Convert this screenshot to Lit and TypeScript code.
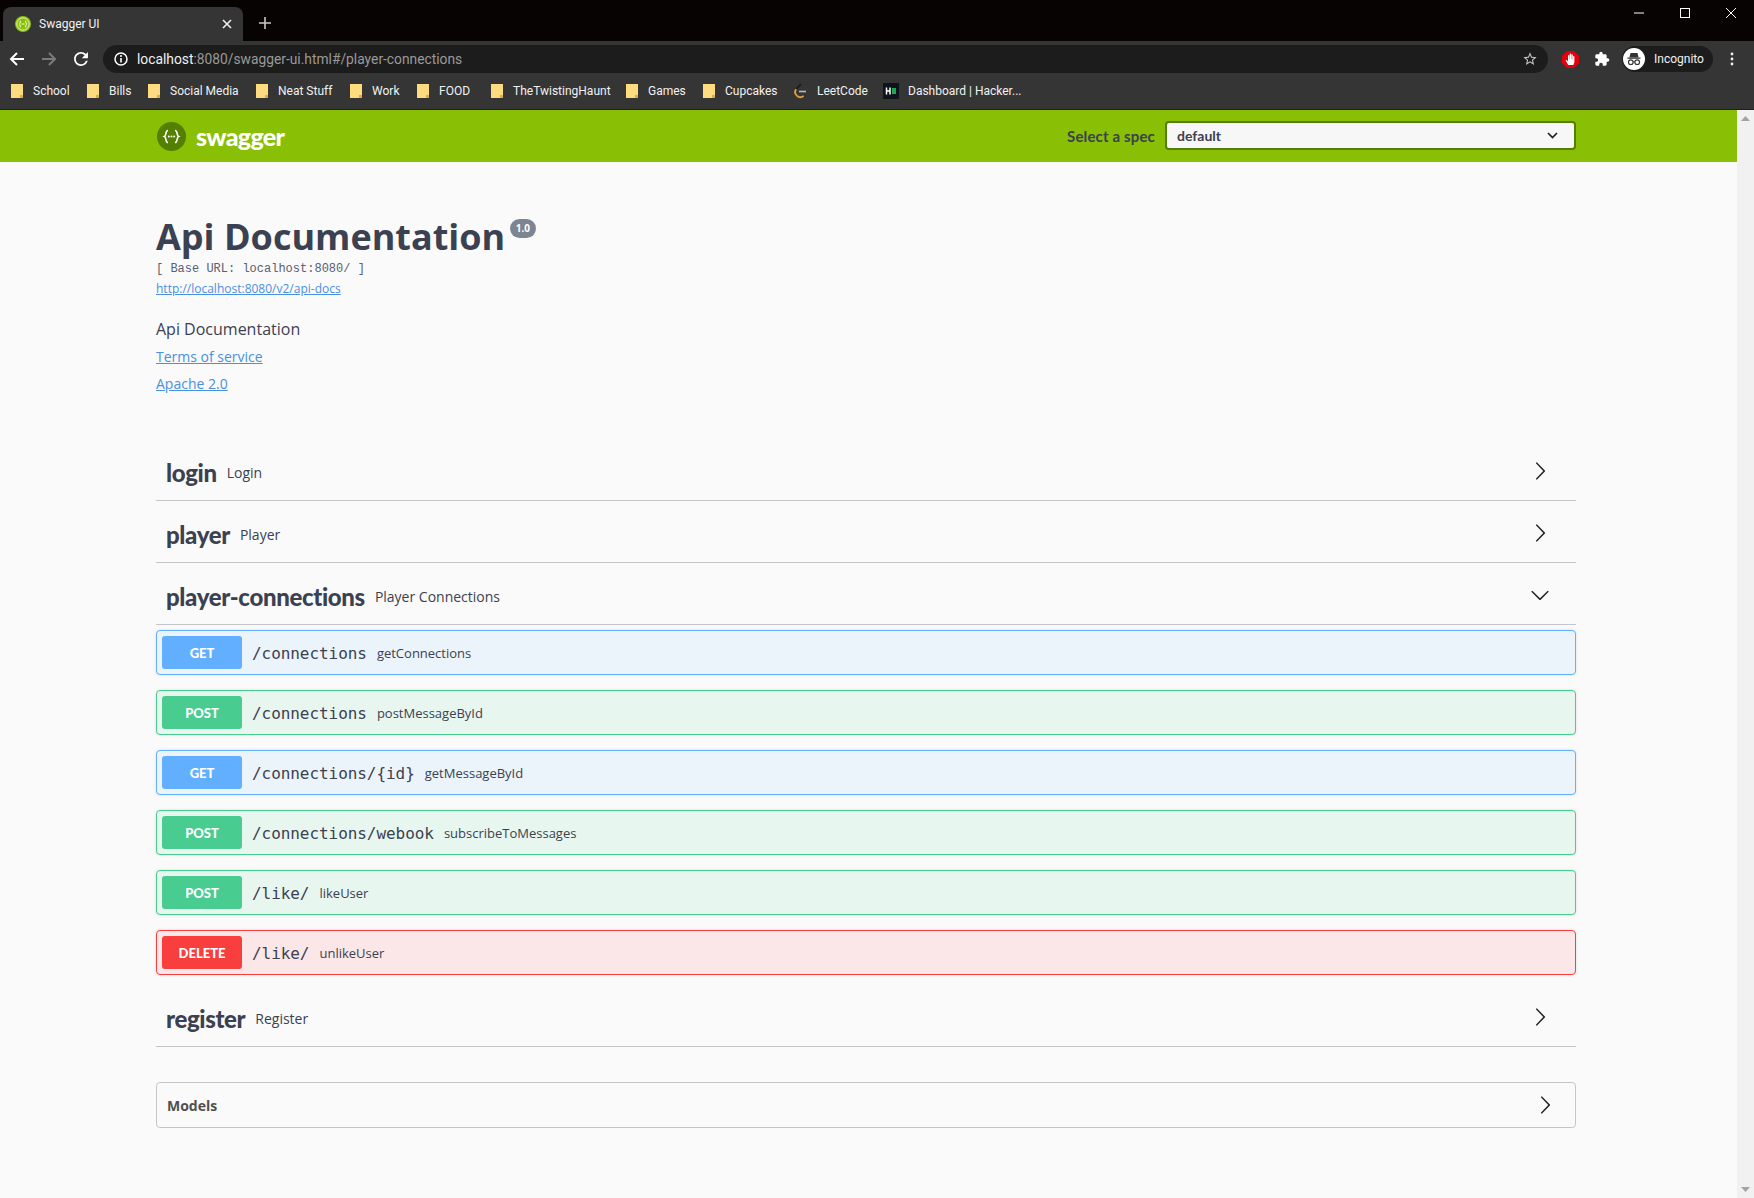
import { LitElement, html, css, svg } from "lit";
import { customElement } from "lit/decorators.js";

const BOOKMARKS: { label: string; icon: "folder" | "leet" | "hacker"; w: number }[] = [
  { label: "School", icon: "folder", w: 76 },
  { label: "Bills", icon: "folder", w: 61 },
  { label: "Social Media", icon: "folder", w: 108 },
  { label: "Neat Stuff", icon: "folder", w: 94 },
  { label: "Work", icon: "folder", w: 67 },
  { label: "FOOD", icon: "folder", w: 74 },
  { label: "TheTwistingHaunt", icon: "folder", w: 135 },
  { label: "Games", icon: "folder", w: 77 },
  { label: "Cupcakes", icon: "folder", w: 90 },
  { label: "LeetCode", icon: "leet", w: 90 },
  { label: "Dashboard | Hacker...", icon: "hacker", w: 140 },
];

const OPS = [
  { m: "get", path: "/connections", d: "getConnections" },
  { m: "post", path: "/connections", d: "postMessageById" },
  { m: "get", path: "/connections/{id}", d: "getMessageById" },
  { m: "post", path: "/connections/webook", d: "subscribeToMessages" },
  { m: "post", path: "/like/", d: "likeUser" },
  { m: "delete", path: "/like/", d: "unlikeUser" },
];

const right = svg`<path d="M13.25 10L6.109 2.58c-.268-.27-.268-.707 0-.979.268-.27.701-.27.969 0l7.83 7.908c.268.271.268.709 0 .979l-7.83 7.908c-.268.271-.701.27-.969 0-.268-.269-.268-.707 0-.979L13.25 10z"/>`;
const down = svg`<path d="M17.418 6.109c.272-.268.709-.268.979 0s.271.701 0 .969l-7.908 7.83c-.27.268-.707.268-.979 0l-7.908-7.83c-.27-.268-.27-.701 0-.969.271-.268.709-.268.979 0L10 13.25l7.418-7.141z"/>`;

@customElement("app-root")
export class AppRoot extends LitElement {
  static styles = css`
    :host { display: block; width: 1754px; height: 1198px; overflow: hidden; background: #fafafa; font-family: "Open Sans", sans-serif; color: #3b4151; }
    svg { display: block; flex: none; }
    a { color: #4990e2; }

    .strip { height: 41px; background: #080303; display: flex; align-items: flex-end; padding-left: 3px; color: #fff; }
    .tab { width: 240px; height: 34px; background: #353535; border-radius: 8px 8px 0 0; display: flex; align-items: center; padding: 0 11px 0 12px; box-sizing: border-box; font: 12px "Roboto", sans-serif; color: #f1f1f1; gap: 8px; }
    .tab-title { flex: 1; }
    .newtab { margin-left: 16px; align-self: center; margin-top: 4px; }
    .winctl { margin-left: auto; display: flex; align-self: flex-start; }
    .winbtn { width: 46px; height: 26px; display: flex; align-items: center; justify-content: center; }

    .toolbar { height: 32px; background: #353535; display: flex; align-items: flex-end; padding-left: 1px; }
    .navbtn { width: 32px; height: 28px; display: flex; align-items: center; justify-content: center; flex: none; }
    .omni { flex: 1; height: 28px; margin: 0 6px; background: #1c1c1c; border-radius: 14px; display: flex; align-items: center; padding: 0 10px 0 11px; font: 13.8px "Roboto", sans-serif; color: #9a9a9a; }
    .omni b { font-weight: 400; color: #f1f1f1; }
    .url { margin-left: 9px; flex: 1; }
    .pill { width: 91px; height: 26px; background: #1c1c1c; border-radius: 13px; margin: 0 0 1px 4px; display: flex; align-items: center; padding-left: 1px; box-sizing: border-box; gap: 9px; font: 12px "Roboto", sans-serif; color: #f1f1f1; flex: none; }
    .menu { width: 41px; height: 28px; box-sizing: border-box; padding-right: 3px; display: flex; align-items: center; justify-content: center; flex: none; }

    .bookmarks { height: 36px; background: #353535; border-bottom: 1px solid #1f1f1f; display: flex; align-items: center; padding-left: 11px; font: 12px "Roboto", sans-serif; color: #f1f1f1; white-space: nowrap; }
    .bm { display: flex; align-items: center; gap: 10px; flex: none; }
    .bm .wide { margin-right: -1px; }

    .main { display: flex; height: 1088px; }
    .page { flex: 1; min-width: 0; }
    .scroll { width: 17px; background: #f1f1f1; display: flex; flex-direction: column; justify-content: space-between; align-items: center; padding: 6px 0; box-sizing: border-box; }

    .topbar { height: 52px; background: #89bf04; display: flex; align-items: center; padding: 0 161px 0 157px; }
    .logo { display: flex; align-items: center; gap: 10px; color: #fff; font: 900 25px "Lato", sans-serif; letter-spacing: -0.7px; }
    .spec { margin-left: auto; display: flex; align-items: center; gap: 10px; font: 700 15px "Lato", sans-serif; letter-spacing: .15px; color: #3b4151; }
    .select { width: 411px; height: 29px; margin-bottom: 1px; box-sizing: border-box; border: 2px solid #547f00; border-radius: 4px; background: #f7f7f7; display: flex; align-items: center; justify-content: space-between; padding: 0 16px 0 10px; font-size: 14px; letter-spacing: 0; }

    .content { padding: 0 161px 0 156px; }
    .info { padding-top: 52px; }
    .title { margin: 0; font-size: 36px; font-weight: 700; line-height: 45px; display: flex; align-items: flex-start; }
    .ver { font-size: 10px; font-weight: 700; color: #fff; background: #7d8492; border-radius: 57px; padding: 2px 5.5px; margin: 5px 0 0 5px; line-height: 15px; }
    .base { font: 12px/17px "Liberation Mono", monospace; padding-top: 2px; color: #5a6070; }
    .spec-link { font-size: 12px; line-height: 17px; display: block; margin-top: 2px; }
    .desc { font-size: 16px; line-height: 22px; margin-top: 21px; }
    .inf-link { display: block; font-size: 14px; line-height: 19px; margin-top: 7px; }
    .inf-link + .inf-link { margin-top: 8px; }

    .tags { margin-top: 46px; }
    .tag { height: 62px; border-bottom: 1px solid #c4c5c9; box-sizing: border-box; display: flex; align-items: center; padding: 2px 26px 0 10px; }
    .tag-name { font: 900 24px "Lato", sans-serif; letter-spacing: -0.35px; margin: 4px 10px 0 0; }
    .tag-desc { font-size: 14px; flex: 1; margin-top: 4px; }

    .ops { padding: 5px 0 10px; display: flex; flex-direction: column; gap: 15px; }
    .op { height: 45px; box-sizing: border-box; border: 1px solid; border-radius: 4px; display: flex; align-items: center; padding-left: 5px; box-shadow: 0 0 3px rgba(0,0,0,.12); }
    .op.get { border-color: #61affe; background: #ebf3fb; }
    .op.post { border-color: #49cc90; background: #e8f6f0; }
    .op.delete { border-color: #f93e3e; background: #fbe7e7; }
    .method { width: 80px; height: 33px; border-radius: 3px; color: #fff; font: 900 13px "Lato", sans-serif; display: flex; align-items: center; justify-content: center; flex: none; }
    .get .method { background: #61affe; }
    .post .method { background: #49cc90; }
    .delete .method { background: #f93e3e; }
    .path { font: 16px "DejaVu Sans Mono", monospace; margin: 2px 0 0 10px; color: #3b4151; letter-spacing: -0.06px; }
    .op-desc { font-size: 13px; margin-left: 10px; }

    .models { margin-top: 35px; height: 46px; box-sizing: border-box; border: 1px solid #c4c5c9; border-radius: 4px; display: flex; align-items: center; justify-content: space-between; padding: 0 20px 0 10px; font-size: 14px; font-weight: 700; color: #505050; }
  `;

  private bmIcon(k: string) {
    if (k === "leet")
      return html`<svg width="14" height="16" viewBox="0 0 14 16"><path d="M8 1L3.2 6.2" fill="none" stroke="#1a1a1a" stroke-width="1.8"/><path d="M3.2 6.2C1.5 8.4 2 11 4 12.8c2 1.8 4.6 1.8 6.6 0" fill="none" stroke="#e8a33a" stroke-width="1.8"/><path d="M6 8.5h7" stroke="#b8b8b8" stroke-width="1.6"/></svg>`;
    if (k === "hacker")
      return html`<svg class="wide" width="16" height="16" viewBox="0 0 16 16"><rect width="16" height="16" rx="1" fill="#0e141e"/><path d="M3.5 4.5v7M7 4.5v7M3.5 8H7" stroke="#fff" stroke-width="1.5" fill="none"/><rect x="9" y="5" width="4" height="6" fill="#1ba94c"/></svg>`;
    return html`<svg width="12" height="14" viewBox="0 0 12 14"><path d="M0 0h12v14H0z" fill="#fddc80"/><path d="M9 11h3v3H9z" fill="#d9ae45"/></svg>`;
  }

  render() {
    return html`
      <div class="strip">
        <div class="tab">
          <svg width="16" height="16" viewBox="0 0 16 16"><circle cx="8" cy="8" r="8" fill="#89bf04"/><circle cx="8" cy="8" r="6.2" fill="none" stroke="#fff" stroke-opacity=".8"/><path d="M6 4.5C4.8 4.5 5.4 7.5 4.4 8c1 .5.4 3.5 1.6 3.5M10 4.5c1.2 0 .6 3 1.6 3.5-1 .5-.4 3.5-1.6 3.5M6.5 8h3" fill="none" stroke="#fff" stroke-width=".9"/></svg>
          <span class="tab-title">Swagger UI</span>
          <svg width="10" height="10" viewBox="0 0 10 10"><path d="M1 1l8 8M9 1L1 9" stroke="#eee" stroke-width="1.6"/></svg>
        </div>
        <svg class="newtab" width="12" height="12" viewBox="0 0 12 12"><path d="M6 0v12M0 6h12" stroke="#c8c8c8" stroke-width="1.6"/></svg>
        <div class="winctl">
          <div class="winbtn"><svg width="10" height="10" viewBox="0 0 10 10"><path d="M0 5h10" stroke="#fff"/></svg></div>
          <div class="winbtn"><svg width="10" height="10" viewBox="0 0 10 10"><rect x=".5" y=".5" width="9" height="9" fill="none" stroke="#fff"/></svg></div>
          <div class="winbtn"><svg width="10" height="10" viewBox="0 0 10 10"><path d="M0 0l10 10M10 0L0 10" stroke="#fff"/></svg></div>
        </div>
      </div>

      <div class="toolbar">
        <div class="navbtn"><svg width="16" height="16" viewBox="0 0 16 16"><path d="M15 8H2M8 2L2 8l6 6" fill="none" stroke="#fff" stroke-width="2"/></svg></div>
        <div class="navbtn"><svg width="16" height="16" viewBox="0 0 16 16"><path d="M1 8h13M8 2l6 6-6 6" fill="none" stroke="#7b7b7b" stroke-width="2"/></svg></div>
        <div class="navbtn"><svg width="16" height="16" viewBox="0 0 24 24"><path fill="#fff" d="M17.65 6.35A7.958 7.958 0 0 0 12 4c-4.42 0-7.99 3.58-7.99 8s3.57 8 7.99 8c3.73 0 6.84-2.55 7.73-6h-2.08A5.99 5.99 0 0 1 12 18c-3.31 0-6-2.69-6-6s2.69-6 6-6c1.66 0 3.14.69 4.22 1.78L13 11h7V4l-2.35 2.35z" transform="translate(12 12) scale(1.3) translate(-12 -12)"/></svg></div>
        <div class="omni">
          <svg width="14" height="14" viewBox="0 0 14 14"><circle cx="7" cy="7" r="6" fill="none" stroke="#fff" stroke-width="1.5"/><path d="M7 6v4.5" stroke="#fff" stroke-width="1.6"/><circle cx="7" cy="4" r="1" fill="#fff"/></svg>
          <span class="url"><b>localhost</b>:8080/swagger-ui.html#/player-connections</span>
          <svg width="16" height="16" viewBox="0 0 24 24"><path fill="#c4c4c4" d="M22 9.24l-7.19-.62L12 2 9.19 8.63 2 9.24l5.46 4.73L5.82 21 12 17.27 18.18 21l-1.63-7.03L22 9.24zM12 15.4l-3.76 2.27 1-4.28-3.32-2.88 4.38-.38L12 6.1l1.71 4.04 4.38.38-3.32 2.88 1 4.28L12 15.4z"/></svg>
        </div>
        <div class="navbtn"><svg width="17" height="17" viewBox="0 0 17 17"><path d="M5 0h7l5 5v7l-5 5H5l-5-5V5z" fill="#e4000f"/><path d="M6.2 14L3.6 9.6l1.1-.7 1.3 1.5V4.6a.7.7 0 0 1 1.4 0V8h.3V3.2a.7.7 0 0 1 1.4 0V8h.3V4a.7.7 0 0 1 1.4 0v4.4h.3V5.4a.7.7 0 0 1 1.3 0V11l-1 3z" fill="#fff"/></svg></div>
        <div class="navbtn"><svg width="16" height="16" viewBox="0 0 24 24"><path fill="#fff" d="M20.5 11H19V7c0-1.1-.9-2-2-2h-4V3.5C13 2.12 11.88 1 10.5 1S8 2.12 8 3.5V5H4c-1.1 0-1.99.9-1.99 2v3.8H3.5c1.49 0 2.7 1.21 2.7 2.7s-1.21 2.7-2.7 2.7H2V20c0 1.1.9 2 2 2h3.8v-1.5c0-1.49 1.21-2.7 2.7-2.7 1.49 0 2.7 1.21 2.7 2.7V22H17c1.1 0 2-.9 2-2v-4h1.5c1.38 0 2.5-1.12 2.5-2.5S21.88 11 20.5 11z"/></svg></div>
        <div class="pill">
          <svg width="22" height="22" viewBox="0 0 22 22"><circle cx="11" cy="11" r="11" fill="#fff"/><path d="M7.5 5h7l1 4.2H6.5zM4.5 9.5h13v1.2h-13z" fill="#333"/><circle cx="7.8" cy="14.2" r="2.3" fill="none" stroke="#333" stroke-width="1.1"/><circle cx="14.2" cy="14.2" r="2.3" fill="none" stroke="#333" stroke-width="1.1"/><path d="M10 14h2" stroke="#333"/></svg>
          <span>Incognito</span>
        </div>
        <div class="menu"><svg width="4" height="14" viewBox="0 0 4 14"><circle cx="2" cy="2" r="1.4" fill="#f1f1f1"/><circle cx="2" cy="7" r="1.4" fill="#f1f1f1"/><circle cx="2" cy="12" r="1.4" fill="#f1f1f1"/></svg></div>
      </div>

      <div class="bookmarks">
        ${BOOKMARKS.map((b) => html`<div class="bm" style="width:${b.w}px">${this.bmIcon(b.icon)}<span>${b.label}</span></div>`)}
      </div>

      <div class="main">
        <div class="page">
          <div class="topbar">
            <div class="logo">
              <svg width="29" height="29" viewBox="0 0 29 29"><circle cx="14.5" cy="14.5" r="14.5" fill="#547f00"/><path d="M11 8.5c-3 0-1.2 5-3.6 6 2.4 1 .6 6 3.6 6M18 8.5c3 0 1.2 5 3.6 6-2.4 1-.6 6-3.6 6" fill="none" stroke="#fff" stroke-width="1.6"/><circle cx="11.8" cy="14.6" r="1" fill="#fff"/><circle cx="14.5" cy="14.6" r="1" fill="#fff"/><circle cx="17.2" cy="14.6" r="1" fill="#fff"/></svg>
              <span>swagger</span>
            </div>
            <div class="spec">
              <span>Select a spec</span>
              <div class="select"><span>default</span>
                <svg width="11" height="7" viewBox="0 0 11 7"><path d="M1 1l4.5 4.5L10 1" fill="none" stroke="#222" stroke-width="1.7"/></svg>
              </div>
            </div>
          </div>

          <div class="content">
            <div class="info">
              <h1 class="title">Api Documentation <span class="ver">1.0</span></h1>
              <div class="base">[ Base URL: localhost:8080/ ]</div>
              <a class="spec-link" href="#">http://localhost:8080/v2/api-docs</a>
              <div class="desc">Api Documentation</div>
              <a class="inf-link" href="#">Terms of service</a>
              <a class="inf-link" href="#">Apache 2.0</a>
            </div>

            <div class="tags">
              ${this.tag("login", "Login", false)}
              ${this.tag("player", "Player", false)}
              ${this.tag("player-connections", "Player Connections", true)}
              <div class="ops">
                ${OPS.map((o) => html`<div class="op ${o.m}"><span class="method">${o.m.toUpperCase()}</span><span class="path">${o.path}</span><span class="op-desc">${o.d}</span></div>`)}
              </div>
              ${this.tag("register", "Register", false)}
            </div>

            <div class="models">
              <span>Models</span>
              <svg width="20" height="20" viewBox="0 0 20 20" fill="#222">${right}</svg>
            </div>
          </div>
        </div>
        <div class="scroll">
          <svg width="9" height="5" viewBox="0 0 9 5"><path d="M4.5 0L9 5H0z" fill="#a3a3a3"/></svg>
          <svg width="9" height="5" viewBox="0 0 9 5"><path d="M0 0h9L4.5 5z" fill="#a3a3a3"/></svg>
        </div>
      </div>
    `;
  }

  private tag(name: string, desc: string, open: boolean) {
    return html`<div class="tag"><span class="tag-name">${name}</span><span class="tag-desc">${desc}</span>
      <svg width="20" height="20" viewBox="0 0 20 20" fill="#222">${open ? down : right}</svg></div>`;
  }
}
